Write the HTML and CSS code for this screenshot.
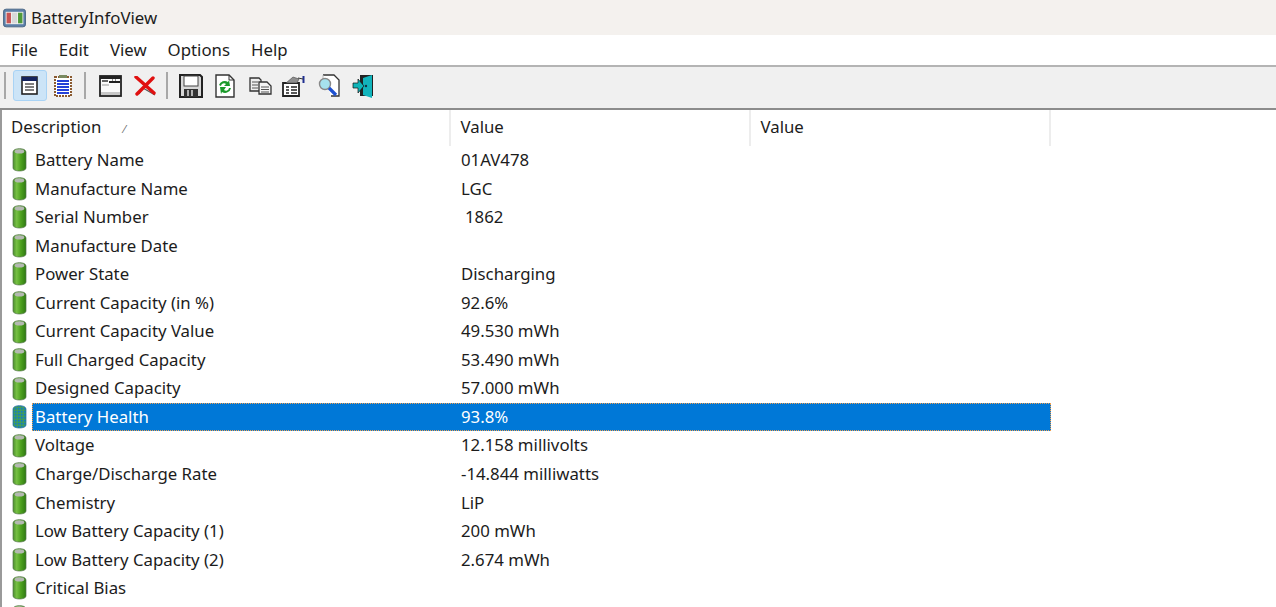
FILE: index.html
```html
<!DOCTYPE html>
<html lang="en">
<head>
    <meta charset="UTF-8">
    <title>BatteryInfoView</title>
    <link rel="stylesheet" href="styles.css">
</head>
<body>
    <svg class="defs" width="0" height="0">
        <defs>
            <linearGradient id="cell" x1="0" x2="1" y1="0" y2="0">
                <stop offset="0" stop-color="#4e8f30"/>
                <stop offset="0.28" stop-color="#76c043"/>
                <stop offset="0.6" stop-color="#4ea11f"/>
                <stop offset="1" stop-color="#2f7a12"/>
            </linearGradient>
            <symbol id="battery" viewBox="0 0 15 24">
                <path d="M1 4c0-4.500 13-4.500 13 0v16c0 4-13 4-13 0z" fill="url(#cell)" stroke="#55754a" stroke-width="0.7"/>
                <ellipse cx="7.500" cy="3.400" rx="4.800" ry="2.100" fill="#b4b8b2"/>
            </symbol>
            <pattern id="dither" width="3" height="3" patternUnits="userSpaceOnUse">
                <rect width="3" height="3" fill="#3d9a62"/>
                <rect width="1.500" height="1.500" fill="#0f78d0"/>
            </pattern>
            <symbol id="battery-sel" viewBox="0 0 15 24">
                <path d="M1 4c0-4.500 13-4.500 13 0v16c0 4-13 4-13 0z" fill="url(#dither)" stroke="#1c6aa8" stroke-width="0.7"/>
            </symbol>
        </defs>
    </svg>

    <div class="titlebar">
        <svg class="app-icon" viewBox="0 0 26 22">
            <rect x="0.5" y="1" width="25" height="20" rx="3" fill="#5b7fa8" stroke="#44607f"/>
            <rect x="3" y="4" width="20" height="14" fill="#f2f2f2"/>
            <rect x="4" y="5" width="5" height="12" fill="#c85454"/>
            <rect x="10" y="5" width="6" height="12" fill="#d9d9d9"/>
            <rect x="17" y="5" width="5" height="12" fill="#4f9a3a"/>
        </svg>
        <span>BatteryInfoView</span>
    </div>

    <div class="menubar">
        <span>File</span>
        <span>Edit</span>
        <span>View</span>
        <span>Options</span>
        <span>Help</span>
    </div>

    <div class="toolbar">
        <i class="sep"></i>
        <button class="tool active">
            <svg width="17" height="19" viewBox="0 0 17 19"><rect x="1" y="1" width="15" height="17" fill="#fff" stroke="#222" stroke-width="1.600"/><rect x="1" y="1" width="15" height="4" fill="#14245e"/><path d="M4 8h9M4 11h9M4 14h9" stroke="#555" stroke-width="1.600"/></svg>
        </button>
        <button class="tool">
            <svg width="18" height="22" viewBox="0 0 18 22"><rect x="1" y="2" width="16" height="19" fill="#fff" stroke="#8a5a30" stroke-width="2" stroke-dasharray="2 1"/><rect x="5" y="0" width="8" height="3" fill="#7a8a60"/><path d="M3 6h12M3 9h12M3 12h12M3 15h12M3 18h12" stroke="#2340d8" stroke-width="2"/></svg>
        </button>
        <i class="sep"></i>
        <button class="tool wide">
            <svg width="23" height="22" viewBox="0 0 23 22"><rect x="1" y="1" width="21" height="20" fill="#fbfbfb" stroke="#222" stroke-width="1.800"/><rect x="1" y="1" width="21" height="3" fill="#222"/><path d="M3 6h6" stroke="#666" stroke-width="2"/><path d="M10 7h11" stroke="#222" stroke-width="2"/><path d="M13 5h1M16 5h1" stroke="#222"/><path d="M3 10h7" stroke="#999"/><rect x="2" y="17" width="19" height="3" fill="#c8c8c8"/></svg>
        </button>
        <button class="tool">
            <svg width="22" height="20" viewBox="0 0 22 20"><path d="M5 18l4-6 12 7" fill="none" stroke="#555" stroke-width="1.200"/><path d="M2 1l18 16M19 2L3 18" stroke="#e01010" stroke-width="3.400" stroke-linecap="round"/></svg>
        </button>
        <i class="sep"></i>
        <button class="tool">
            <svg width="24" height="24" viewBox="0 0 24 24"><path d="M1 1h20l2 2v20H1z" fill="#d8d8d8" stroke="#222" stroke-width="2"/><rect x="5" y="2" width="14" height="10" fill="#fff" stroke="#444"/><rect x="5" y="15" width="14" height="8" fill="#333"/><path d="M9 16v6M13 16v6" stroke="#ddd" stroke-width="1.500"/></svg>
        </button>
        <button class="tool">
            <svg width="20" height="24" viewBox="0 0 20 24"><path d="M1 1h13l5 5v17H1z" fill="#fff" stroke="#333" stroke-width="1.400"/><path d="M14 1v5h5" fill="none" stroke="#333"/><path d="M4 11a6 6 0 0 1 9-3l1-2 1 6-6 0 2-2a3 3 0 0 0-5 2z" fill="#1a9a2a"/><path d="M16 14a6 6 0 0 1-9 4l-1 2-1-7 6 0-2 3a3 3 0 0 0 5-2z" fill="#1a9a2a"/></svg>
        </button>
        <button class="tool copy">
            <svg width="23" height="18" viewBox="0 0 23 18"><path d="M1 1h9l2 2v11H1z" fill="#eee" stroke="#333" stroke-width="1.300"/><path d="M3 5h6M3 8h6M3 11h6" stroke="#555" stroke-width="1.200"/><path d="M10 5h8l4 4v8H10z" fill="#f4f4f4" stroke="#333" stroke-width="1.300"/><path d="M12 10h8M12 12.500h8M12 15h8" stroke="#555" stroke-width="1.200"/></svg>
        </button>
        <button class="tool">
            <svg width="23" height="22" viewBox="0 0 23 22"><path d="M1 8h16v13H1z" fill="#fff" stroke="#222" stroke-width="1.800"/><path d="M4 12h3M9 12h6M4 15h3M9 15h6M4 18h3M9 18h6" stroke="#222" stroke-width="1.500"/><path d="M4 8l7-6 6 2-2 4z" fill="#8e8e8e" stroke="#444" stroke-width="0.600"/><path d="M21.500 1v7" stroke="#1f2f90" stroke-width="2"/><path d="M16 3l5 1" stroke="#333"/></svg>
        </button>
        <button class="tool find">
            <svg width="22" height="24" viewBox="0 0 22 24"><path d="M5 1h11l5 5v16h-8" fill="#fff" stroke="#333" stroke-width="1.300"/><path d="M5 1v5" stroke="#bbb"/><circle cx="7" cy="10" r="5.500" fill="#a6e2ee" stroke="#888" stroke-width="1.400"/><path d="M11 14l7 7" stroke="#1c4fd0" stroke-width="3.200"/></svg>
        </button>
        <button class="tool">
            <svg width="22" height="24" viewBox="0 0 22 24"><path d="M8 1h13v21H8z" fill="#222"/><path d="M11 4l9-3v23l-9-3z" fill="#12b4bc"/><circle cx="14" cy="12" r="1.200" fill="#134"/><path d="M1 9h5V5l6 7-6 7v-5H1z" fill="#0fb4b8" stroke="#111" stroke-width="0.700"/></svg>
        </button>
    </div>

    <div class="list">
        <div class="list-head">
            <div class="col-head col-desc">Description <span class="sort-mark">⁄</span></div>
            <div class="col-head col-val">Value</div>
            <div class="col-head col-val">Value</div>
        </div>

        <div class="row"><svg class="batt"><use href="#battery"/></svg><div class="cells"><span class="cell-desc">Battery Name</span><span class="cell-val">01AV478</span></div></div>
        <div class="row"><svg class="batt"><use href="#battery"/></svg><div class="cells"><span class="cell-desc">Manufacture Name</span><span class="cell-val">LGC</span></div></div>
        <div class="row"><svg class="batt"><use href="#battery"/></svg><div class="cells"><span class="cell-desc">Serial Number</span><span class="cell-val serial">1862</span></div></div>
        <div class="row"><svg class="batt"><use href="#battery"/></svg><div class="cells"><span class="cell-desc">Manufacture Date</span><span class="cell-val"></span></div></div>
        <div class="row"><svg class="batt"><use href="#battery"/></svg><div class="cells"><span class="cell-desc">Power State</span><span class="cell-val">Discharging</span></div></div>
        <div class="row"><svg class="batt"><use href="#battery"/></svg><div class="cells"><span class="cell-desc">Current Capacity (in %)</span><span class="cell-val">92.6%</span></div></div>
        <div class="row"><svg class="batt"><use href="#battery"/></svg><div class="cells"><span class="cell-desc">Current Capacity Value</span><span class="cell-val">49.530 mWh</span></div></div>
        <div class="row"><svg class="batt"><use href="#battery"/></svg><div class="cells"><span class="cell-desc">Full Charged Capacity</span><span class="cell-val">53.490 mWh</span></div></div>
        <div class="row"><svg class="batt"><use href="#battery"/></svg><div class="cells"><span class="cell-desc">Designed Capacity</span><span class="cell-val">57.000 mWh</span></div></div>
        <div class="row selected"><svg class="batt"><use href="#battery-sel"/></svg><div class="cells"><span class="cell-desc">Battery Health</span><span class="cell-val">93.8%</span></div></div>
        <div class="row"><svg class="batt"><use href="#battery"/></svg><div class="cells"><span class="cell-desc">Voltage</span><span class="cell-val">12.158 millivolts</span></div></div>
        <div class="row"><svg class="batt"><use href="#battery"/></svg><div class="cells"><span class="cell-desc">Charge/Discharge Rate</span><span class="cell-val">-14.844 milliwatts</span></div></div>
        <div class="row"><svg class="batt"><use href="#battery"/></svg><div class="cells"><span class="cell-desc">Chemistry</span><span class="cell-val">LiP</span></div></div>
        <div class="row"><svg class="batt"><use href="#battery"/></svg><div class="cells"><span class="cell-desc">Low Battery Capacity (1)</span><span class="cell-val">200 mWh</span></div></div>
        <div class="row"><svg class="batt"><use href="#battery"/></svg><div class="cells"><span class="cell-desc">Low Battery Capacity (2)</span><span class="cell-val">2.674 mWh</span></div></div>
        <div class="row"><svg class="batt"><use href="#battery"/></svg><div class="cells"><span class="cell-desc">Critical Bias</span><span class="cell-val"></span></div></div>
        <div class="row"><svg class="batt"><use href="#battery"/></svg><div class="cells"><span class="cell-desc"></span><span class="cell-val"></span></div></div>
    </div>
</body>
</html>
```

FILE: styles.css
```css
html, body {
    height: 100%;
}

body {
    margin: 0;
    overflow: hidden;
    background: #fff;
    color: #1c1c1c;
    font-family: "Noto Sans", "Open Sans", sans-serif;
    font-size: 16.8px;
}

.defs {
    position: absolute;
}

/* window title */
.titlebar {
    display: flex;
    align-items: center;
    gap: 5px;
    height: 35px;
    padding-left: 3px;
    background-color: #f4f1ee;
}

.app-icon {
    width: 23px;
    height: 20px;
}

/* menu */
.menubar {
    display: flex;
    align-items: center;
    gap: 21px;
    height: 30px;
    padding: 0 0 2px 11px;
    box-sizing: border-box;
    background-color: #fff;
}

/* toolbar */
.toolbar {
    display: flex;
    align-items: center;
    height: 37px;
    padding-bottom: 4px;
    background-color: #f0f0f0;
    border-top: 2px solid #b4b4b4;
    border-bottom: 2px solid #8c8c8c;
}

.sep {
    flex: none;
    width: 2px;
    height: 27px;
    margin: 0 7px 0 4px;
    background-color: #a8a8a8;
}

.tool {
    display: flex;
    align-items: center;
    justify-content: center;
    flex: none;
    box-sizing: border-box;
    width: 33.5px;
    height: 31px;
    padding: 0;
    background: none;
    border: 1px solid transparent;
    border-radius: 3px;
}

.tool.active {
    background-color: #cce4f7;
    border-color: #a9d3f5;
}

.tool.wide {
    width: 35px;
}

.tool.copy,
.tool.find {
    margin-left: 2px;
}

/* list view */
.list {
    border-left: 2px solid #9a9a9a;
}

.list-head {
    display: flex;
    height: 36px;
}

.col-head {
    box-sizing: border-box;
    flex: none;
    padding: 5px 0 0 9px;
    border-right: 2px solid #ededed;
}

.col-head + .col-head {
    padding-left: 9.5px;
}

.col-desc {
    width: 449px;
}

.col-val {
    width: 300px;
}

.sort-mark {
    margin-left: 18px;
    font-size: 11px;
    color: #666;
}

.row {
    display: flex;
    align-items: center;
    width: 1049px;
    height: 28.55px;
}

.batt {
    flex: none;
    width: 15px;
    height: 24px;
    margin: 0 5px 0 10px;
}

.cells {
    display: flex;
    flex: 1;
    height: 100%;
    line-height: 28px;
}

.cell-desc {
    box-sizing: border-box;
    flex: none;
    width: 420px;
    padding-left: 3px;
}

.cell-val {
    padding-left: 9px;
}

.serial {
    padding-left: 13px;
}

.selected .cells {
    color: #fff;
    background-color: #0078d7;
    outline: 1px dotted #f0a050;
    outline-offset: -1px;
}
```
